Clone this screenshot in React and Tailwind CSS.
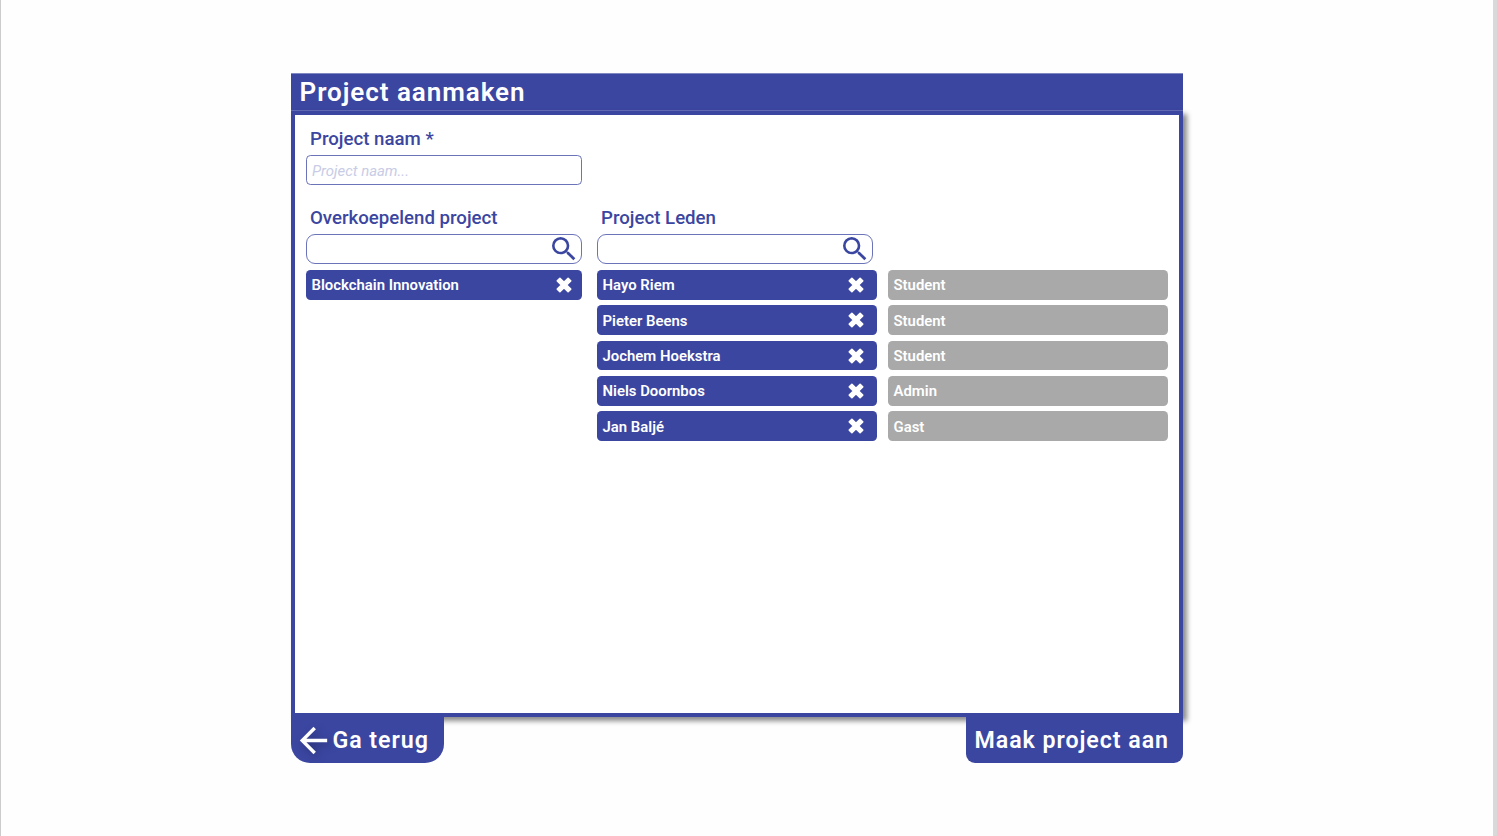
import { MdSearch, MdArrowBack } from "react-icons/md";

const members = [
  { name: "Hayo Riem", role: "Student" },
  { name: "Pieter Beens", role: "Student" },
  { name: "Jochem Hoekstra", role: "Student" },
  { name: "Niels Doornbos", role: "Admin" },
  { name: "Jan Baljé", role: "Gast" },
];

function Cross() {
  return (
    <svg viewBox="0 0 16 16" className="size-4 shrink-0" fill="white" stroke="white" strokeWidth="1.6" strokeLinejoin="round">
      <path d="M3.9 1.3L8 5.4L12.1 1.3L14.7 3.9L10.6 8L14.7 12.1L12.1 14.7L8 10.6L3.9 14.7L1.3 12.1L5.4 8L1.3 3.9Z" />
    </svg>
  );
}

function Label({ children }) {
  return <label className="block h-6 pl-1 text-[18.65px] leading-[26px] font-medium whitespace-nowrap">{children}</label>;
}

function SearchBox() {
  return (
    <div className="mt-[5px] flex h-[30px] w-[276px] items-center justify-end rounded-[9px] border border-[#3b46a1]/75 pr-px">
      <MdSearch className="size-8 shrink-0" />
    </div>
  );
}

function Chip({ children, compact }) {
  return (
    <div className={`flex h-[29.7px] items-center justify-between rounded-[4.5px] bg-[#3b46a1] pl-[5.5px] text-[14.9px] font-semibold text-white ${compact ? "pr-[10px]" : "pr-[13px]"}`}>
      <span className="pt-px">{children}</span>
      <Cross />
    </div>
  );
}

export default function App() {
  return (
    <div className="flex h-[836px] w-full justify-center overflow-hidden border-r-4 border-l border-r-[#d9d9d9] border-l-[#cccccc] bg-[#fefefe] pt-[73px] font-['Roboto',sans-serif] text-[#3b46a1]">
      <main className="mr-[20px] w-[892px] shrink-0">
        <h1 className="h-[37px] border-t border-[#8088c2] bg-[#3b46a1] pl-[8.5px] text-[26px] leading-[36px] font-semibold tracking-[0.95px] text-white">
          Project aanmaken
        </h1>
        <section className="h-[607px] border-4 border-t-0 border-[#3b46a1] bg-white shadow-[4px_4px_5px_rgba(0,0,0,0.45)]">
          <div className="-mx-1 h-[5px] border-t border-[#5f69b3] bg-[#3b46a1]" />
          <div className="px-[11px] pt-[11.4px]">
            <Label>Project naam *</Label>
            <input
              className="mt-[5px] block h-[30px] w-[276px] rounded-[4.5px] border border-[#3b46a1]/75 px-[5px] pt-0.5 text-[14.9px] italic outline-none placeholder:text-[#c8cce6]"
              placeholder="Project naam..."
            />
            <div className="mt-5 flex">
              <div className="w-[276px]">
                <Label>Overkoepelend project</Label>
                <SearchBox />
                <div className="mt-[5.6px]">
                  <Chip compact>Blockchain Innovation</Chip>
                </div>
              </div>
              <div className="ml-[15px] w-[280px]">
                <Label>Project Leden</Label>
                <SearchBox />
                <div className="mt-[5.6px] space-y-[5.7px]">
                  {members.map((m) => (
                    <Chip key={m.name}>{m.name}</Chip>
                  ))}
                </div>
              </div>
              <div className="ml-[11px] w-[280px] space-y-[5.7px] pt-[64.6px]">
                {members.map((m) => (
                  <div key={m.name} className="flex h-[29.7px] items-center rounded-[4.5px] bg-[#a9a9a9] pt-px pl-[5.5px] text-[14.9px] font-semibold text-white">
                    {m.role}
                  </div>
                ))}
              </div>
            </div>
          </div>
        </section>
        <footer className="relative flex items-start justify-between text-[23.2px] font-semibold text-white">
          <button className="flex h-[46px] w-[153px] items-center rounded-b-[19px] bg-[#3b46a1] pl-[2px] tracking-[0.95px]">
            <MdArrowBack className="mt-px size-[41px] shrink-0 drop-shadow-[3px_3px_4px_rgba(0,0,0,0.3)]" />
            <span className="-ml-[1.5px] pt-px">Ga terug</span>
          </button>
          <button className="flex h-[45.5px] w-[217px] items-center rounded-b-[9px] bg-[#3b46a1] pt-0.5 pl-[8.5px] tracking-[0.95px] whitespace-nowrap">
            Maak project aan
          </button>
        </footer>
      </main>
    </div>
  );
}
